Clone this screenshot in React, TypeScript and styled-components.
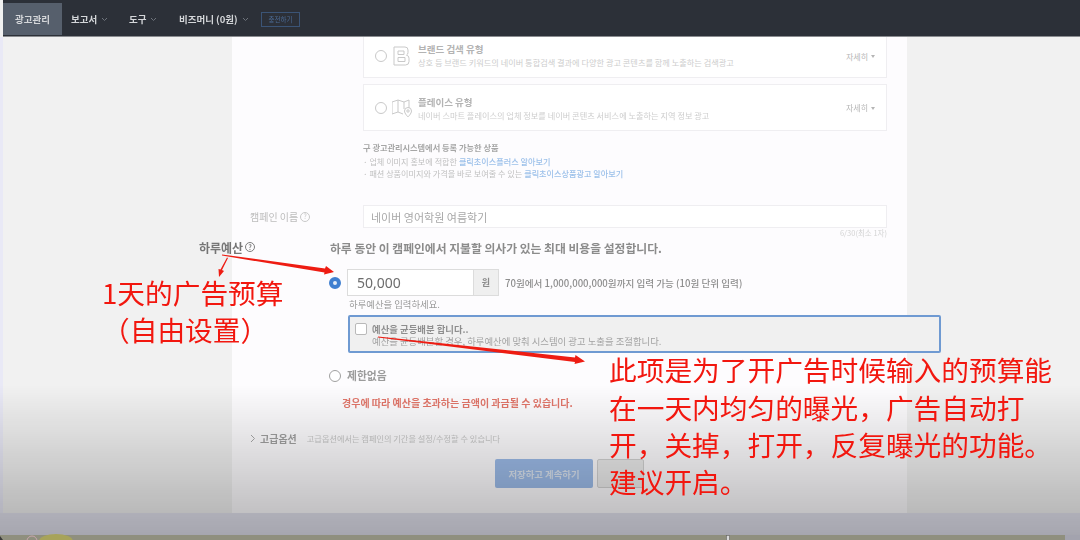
import React from "react";
import styled, { createGlobalStyle } from "styled-components";

const Global = createGlobalStyle`
  html, body { margin: 0; padding: 0; width: 1080px; height: 540px; overflow: hidden; background: #f1f1f1; }
  * { box-sizing: border-box; }
  #root { width: 1080px; height: 540px; }
`;

const KR = `"Noto Sans CJK KR", "Noto Sans", sans-serif`;

const Page = styled.div`
  position: relative;
  width: 1080px;
  height: 540px;
  display: flex;
  flex-direction: column;
  overflow: hidden;
  font-family: ${KR};
  background: #f1f1f1;
`;

const TopBar = styled.header`
  height: 37px;
  margin-left: 3px;
  flex: none;
  display: flex;
  align-items: stretch;
  padding: 3px 0 1px;
  background: #2c3038;
  border-bottom: 1px solid #8a8c90;
  filter: blur(0.35px);
`;

const NavItem = styled.div<{ $active?: boolean; $w: number }>`
  width: ${(p) => p.$w}px;
  display: flex;
  align-items: center;
  justify-content: ${(p) => (p.$active ? "center" : "flex-start")};
  padding-left: ${(p) => (p.$active ? 0 : 9)}px;
  gap: 4px;
  font-size: 9.5px;
  font-weight: 700;
  color: #d4d6d9;
  background: ${(p) => (p.$active ? "#565f6c" : "transparent")};
`;

const Caret = styled.svg`
  width: 7px;
  height: 5px;
  fill: none;
  stroke: #6e737b;
  stroke-width: 1;
`;

const ChargeButton = styled.div`
  align-self: center;
  width: 39px;
  height: 15px;
  border: 1px solid #3b5476;
  color: #4b6a94;
  font-size: 6.5px;
  display: flex;
  align-items: center;
  justify-content: center;
`;

const Main = styled.main`
  height: 476px;
  flex: none;
  display: flex;
  padding-left: 3px;
  background: linear-gradient(to right, #e9e9f6 0 3px, #f1f1f1 3px);
  overflow: hidden;
`;

const Panel = styled.section`
  width: 675px;
  height: 476px;
  margin-left: 229px;
  padding: 0 20px 0 18px;
  display: flex;
  flex-direction: column;
  align-items: flex-start;
  background: #fdfcfe;
  filter: blur(0.55px);
`;

const CardStack = styled.div`
  margin-left: 113px;
  width: 524px;
  display: flex;
  flex-direction: column;
  gap: 6px;
`;

const Card = styled.div<{ $h: number; $cut?: boolean }>`
  height: ${(p) => p.$h}px;
  display: flex;
  align-items: center;
  padding: 0 11px ${(p) => (p.$cut ? 2 : 0)}px 11px;
  background: #fff;
  border: 1px solid #efeef1;
  border-top-width: ${(p) => (p.$cut ? 0 : 1)}px;
`;

const Radio = styled.span<{ $on?: boolean; $c?: string }>`
  flex: none;
  width: 12px;
  height: 12px;
  border-radius: 50%;
  background: ${(p) => (p.$on ? "#e4ecf7" : "#fff")};
  border: ${(p) => (p.$on ? "4px solid #3f7fd0" : `1.5px solid ${p.$c || "#c9c9c9"}`)};
`;

const CardIcon = styled.svg`
  flex: none;
  width: 20px;
  height: 20px;
  margin-left: 5px;
  fill: none;
  stroke: #c9c9c9;
  stroke-width: 1;
`;

const CardText = styled.div<{ $nudge?: boolean }>`
  flex: 1;
  margin-left: 6px;
  padding-top: ${(p) => (p.$nudge ? 2 : 0)}px;
  display: flex;
  flex-direction: column;
`;

const CardTitle = styled.div`
  font-size: 9.5px;
  font-weight: 700;
  line-height: 13px;
  color: #b3b3b3;
`;

const CardDesc = styled.div`
  font-size: 8.2px;
  line-height: 13px;
  color: #cdcdcd;
  white-space: nowrap;
`;

const Detail = styled.div`
  display: flex;
  align-items: center;
  gap: 3px;
  font-size: 8px;
  color: #b5b5b5;
  &::after {
    content: "";
    border: 2.5px solid transparent;
    border-top: 3px solid #b5b5b5;
    margin-top: 3px;
  }
`;

const Legacy = styled.div`
  margin: 9px 0 0 113px;
  display: flex;
  flex-direction: column;
`;

const LegacyTitle = styled.div`
  font-size: 8.2px;
  font-weight: 700;
  line-height: 14px;
  color: #a6a6a6;
  margin-bottom: 2px;
`;

const LegacyLine = styled.div`
  font-size: 8.15px;
  line-height: 12px;
  color: #c0c0c0;
  white-space: nowrap;
  & > b {
    font-weight: 500;
    color: #9cc0ea;
  }
`;

const NameRow = styled.div`
  margin-top: 25px;
  width: 100%;
  display: flex;
  align-items: center;
`;

const NameLabel = styled.div`
  width: 113px;
  flex: none;
  font-size: 10px;
  color: #bcbcbc;
  display: flex;
  align-items: center;
`;

const Help = styled.span<{ $c: string }>`
  display: inline-flex;
  align-items: center;
  justify-content: center;
  width: 10px;
  height: 10px;
  margin-left: 2px;
  border: 1px solid ${(p) => p.$c};
  border-radius: 50%;
  color: ${(p) => p.$c};
  font-size: 7px;
  line-height: 1;
`;

const NameInput = styled.div`
  flex: 1;
  height: 23px;
  display: flex;
  align-items: center;
  padding-left: 7px;
  background: #fff;
  border: 1px solid #efeef1;
  font-size: 11px;
  color: #a8a8a8;
`;

const Counter = styled.div`
  align-self: flex-end;
  margin-top: -1px;
  font-size: 7.5px;
  line-height: 11px;
  color: #d3d3d3;
`;

const BudgetHead = styled.div`
  margin-left: -51px;
  display: flex;
  align-items: center;
  height: 18px;
`;

const BudgetLabel = styled.div`
  width: 131px;
  flex: none;
  font-size: 12px;
  font-weight: 700;
  color: #757575;
  display: flex;
  align-items: center;
`;

const BudgetIntro = styled.div`
  font-size: 11.8px;
  font-weight: 700;
  color: #8b8b8b;
  white-space: nowrap;
`;

const AmountRow = styled.div`
  margin: 13px 0 0 79px;
  display: flex;
  align-items: center;
`;

const AmountInput = styled.div`
  margin-left: 6px;
  width: 127px;
  height: 27px;
  display: flex;
  align-items: center;
  padding-left: 9px;
  background: #fff;
  border: 1px solid #dcdcdc;
  font-family: "Noto Sans", sans-serif;
  font-size: 14px;
  color: #6d6d6d;
`;

const AmountUnit = styled.div`
  width: 25px;
  height: 27px;
  display: flex;
  align-items: center;
  justify-content: center;
  background: #efefef;
  border: 1px solid #dcdcdc;
  border-left: 0;
  font-size: 9px;
  font-weight: 700;
  color: #8a8a8a;
`;

const AmountHint = styled.div`
  margin-left: 6px;
  font-size: 9.6px;
  font-weight: 500;
  color: #8e8e8e;
  white-space: nowrap;
`;

const Validation = styled.div`
  margin: 2px 0 0 99px;
  font-size: 9.4px;
  line-height: 13px;
  color: #9a9a9a;
`;

const OptionBox = styled.div`
  margin: 4px 0 0 98px;
  width: 593px;
  height: 38px;
  flex: none;
  display: flex;
  padding: 6px 0 0 5px;
  gap: 5px;
  background: #f0f0f0;
  border: 2px solid #6f9ad2;
  border-radius: 2px;
`;

const Check = styled.span`
  flex: none;
  width: 12px;
  height: 12px;
  background: #fff;
  border: 1px solid #b9b9b9;
  border-radius: 2px;
`;

const OptionText = styled.div`
  font-size: 9.4px;
  line-height: 12px;
  color: #a2a2a2;
  white-space: nowrap;
  & > strong {
    font-weight: 700;
    color: #8e8e8e;
  }
`;

const NoLimit = styled.div`
  margin: 15px 0 0 79px;
  display: flex;
  align-items: center;
  gap: 6px;
  font-size: 10.8px;
  line-height: 15px;
  font-weight: 700;
  color: #9b9b9b;
`;

const Warning = styled.div`
  margin: 13px 0 0 92px;
  font-size: 10px;
  font-weight: 700;
  line-height: 14px;
  color: #e2766a;
  white-space: nowrap;
`;

const Advanced = styled.div`
  margin: 21px 0 0 0;
  display: flex;
  align-items: center;
  height: 14px;
`;

const Chevron = styled.svg`
  width: 6px;
  height: 9px;
  margin-right: 4px;
  fill: none;
  stroke: #a8a8a8;
  stroke-width: 1;
`;

const AdvancedTitle = styled.div`
  font-size: 10px;
  font-weight: 700;
  color: #a0a0a0;
`;

const AdvancedDesc = styled.div`
  margin-left: 10px;
  font-size: 8.2px;
  color: #c8c8c8;
  white-space: nowrap;
`;

const Actions = styled.div`
  margin: 14px 0 0 245px;
  display: flex;
  gap: 4px;
`;

const PrimaryButton = styled.div`
  width: 98px;
  height: 29px;
  display: flex;
  align-items: center;
  justify-content: center;
  background: #9cbbe8;
  border-radius: 2px;
  font-size: 9.4px;
  font-weight: 700;
  color: #d9e3ef;
`;

const SecondaryButton = styled.div`
  width: 47px;
  height: 29px;
  background: #ececec;
  border: 1px solid #d2d2d2;
  border-radius: 2px;
`;

const Footer = styled.div`
  height: 22px;
  flex: none;
  background: #e4e4f0;
`;

const Desktop = styled.div`
  height: 5px;
  flex: none;
  background: linear-gradient(to right, #8f8f7e 0 1065px, #a3a3ae 1065px);
`;

const Shade = styled.div`
  position: absolute;
  left: 0;
  right: 0;
  top: 385px;
  height: 150px;
  background: linear-gradient(to bottom, rgba(0, 0, 0, 0) 0%, rgba(0, 0, 0, 0.27) 100%);
  pointer-events: none;
`;

const Marks = styled.svg`
  position: absolute;
  left: 0;
  top: 0;
  width: 1080px;
  height: 540px;
  pointer-events: none;
`;

const Note = styled.div<{ $x: number; $y: number }>`
  position: absolute;
  left: ${(p) => p.$x}px;
  top: ${(p) => p.$y}px;
  font-family: "Noto Sans CJK SC", sans-serif;
  font-size: 27.7px;
  font-weight: 400;
  line-height: 37px;
  color: #f2170f;
  white-space: nowrap;
`;

const Down = () => (
  <Caret viewBox="0 0 7 5">
    <path d="M1 1l2.5 2.5L6 1" />
  </Caret>
);

export default function App() {
  return (
    <Page>
      <Global />
      <TopBar>
        <NavItem $active $w={59}>광고관리</NavItem>
        <NavItem $w={58}>보고서 <Down /></NavItem>
        <NavItem $w={50}>도구 <Down /></NavItem>
        <NavItem $w={91}>비즈머니 (0원) <Down /></NavItem>
        <ChargeButton>충전하기</ChargeButton>
      </TopBar>
      <Main>
        <Panel>
          <CardStack>
            <Card $h={41} $cut>
              <Radio />
              <CardIcon viewBox="0 0 20 20">
                <path d="M2 1h11a3 3 0 0 1 3 3v2.500a3 3 0 0 1-1.500 2.700 3 3 0 0 1 2.500 3v3.300a3.500 3.500 0 0 1-3.500 3.500H2z" />
                <path d="M6 5h6v3.500H6zM6 11.500h7v4H6z" />
              </CardIcon>
              <CardText>
                <CardTitle>브랜드 검색 유형</CardTitle>
                <CardDesc>상호 등 브랜드 키워드의 네이버 통합검색 결과에 다양한 광고 콘텐츠를 함께 노출하는 검색광고</CardDesc>
              </CardText>
              <Detail>자세히</Detail>
            </Card>
            <Card $h={47}>
              <Radio />
              <CardIcon viewBox="0 0 20 20">
                <path d="M0 4l6-2 6 2 5-2v8M0 4v12l6-2 5 2M6 2v12M12 4v7" />
                <path d="M16 19s-3.500-3.500-3.500-6a3.500 3.500 0 0 1 7 0c0 2.500-3.500 6-3.500 6z" />
                <circle cx="16" cy="13" r="1.200" />
              </CardIcon>
              <CardText $nudge>
                <CardTitle>플레이스 유형</CardTitle>
                <CardDesc>네이버 스마트 플레이스의 업체 정보를 네이버 콘텐츠 서비스에 노출하는 지역 정보 광고</CardDesc>
              </CardText>
              <Detail>자세히</Detail>
            </Card>
          </CardStack>
          <Legacy>
            <LegacyTitle>구 광고관리시스템에서 등록 가능한 상품</LegacyTitle>
            <LegacyLine>· 업체 이미지 홍보에 적합한 <b>클릭초이스플러스 알아보기</b></LegacyLine>
            <LegacyLine>· 패션 상품이미지와 가격을 바로 보여줄 수 있는 <b>클릭초이스상품광고 알아보기</b></LegacyLine>
          </Legacy>
          <NameRow>
            <NameLabel>캠페인 이름<Help $c="#c8c8c8">?</Help></NameLabel>
            <NameInput>네이버 영어학원 여름학기</NameInput>
          </NameRow>
          <Counter>6/30(최소 1자)</Counter>
          <BudgetHead>
            <BudgetLabel>하루예산<Help $c="#7d7d7d">?</Help></BudgetLabel>
            <BudgetIntro>하루 동안 이 캠페인에서 지불할 의사가 있는 최대 비용을 설정합니다.</BudgetIntro>
          </BudgetHead>
          <AmountRow>
            <Radio $on />
            <AmountInput>50,000</AmountInput>
            <AmountUnit>원</AmountUnit>
            <AmountHint>70원에서 1,000,000,000원까지 입력 가능 (10원 단위 입력)</AmountHint>
          </AmountRow>
          <Validation>하루예산을 입력하세요.</Validation>
          <OptionBox>
            <Check />
            <OptionText>
              <strong>예산을 균등배분 합니다..</strong>
              <br />
              예산을 균등배분할 경우, 하루예산에 맞춰 시스템이 광고 노출을 조절합니다.
            </OptionText>
          </OptionBox>
          <NoLimit>
            <Radio $c="#9f9f9f" />
            제한없음
          </NoLimit>
          <Warning>경우에 따라 예산을 초과하는 금액이 과금될 수 있습니다.</Warning>
          <Advanced>
            <Chevron viewBox="0 0 6 9">
              <path d="M1 1l3.500 3.500L1 8" />
            </Chevron>
            <AdvancedTitle>고급옵션</AdvancedTitle>
            <AdvancedDesc>고급옵션에서는 캠페인의 기간을 설정/수정할 수 있습니다</AdvancedDesc>
          </Advanced>
          <Actions>
            <PrimaryButton>저장하고 계속하기</PrimaryButton>
            <SecondaryButton />
          </Actions>
        </Panel>
      </Main>
      <Footer />
      <Desktop />
      <Shade />
      <Marks viewBox="0 0 1080 540">
        <ellipse cx="56" cy="541" rx="17" ry="7" fill="#a7a35a" />
        <circle cx="32" cy="541" r="5" fill="none" stroke="#c9a6ae" strokeWidth="1" />
        <polygon points="0,536 3,540 0,540" fill="#3a3a3a" />
        <rect x="726.500" y="535.500" width="3" height="5" fill="#d8d8d8" stroke="#666" strokeWidth="0.6" />
        <g fill="#ee1c12">
          <polygon points="222,254.500 325,268.500 326,266 334,272 324,274.500 324.500,272.500 222,255.500" />
          <polygon points="228,258 222,270 224,271 219,277 218.500,269 220.500,269.500 227,257.500" />
          <polygon points="378,336.500 575,357.500 575.500,355 585,361.500 574.500,364 575,362 378,337.500" />
        </g>
      </Marks>
      <Note $x={102} $y={274}>1天的广告预算</Note>
      <Note $x={102} $y={311}>（自由设置）</Note>
      <Note $x={609} $y={351}>此项是为了开广告时候输入的预算能</Note>
      <Note $x={609} $y={389}>在一天内均匀的曝光，广告自动打</Note>
      <Note $x={609} $y={426}>开，关掉，打开，反复曝光的功能。</Note>
      <Note $x={609} $y={463}>建议开启。</Note>
    </Page>
  );
}
